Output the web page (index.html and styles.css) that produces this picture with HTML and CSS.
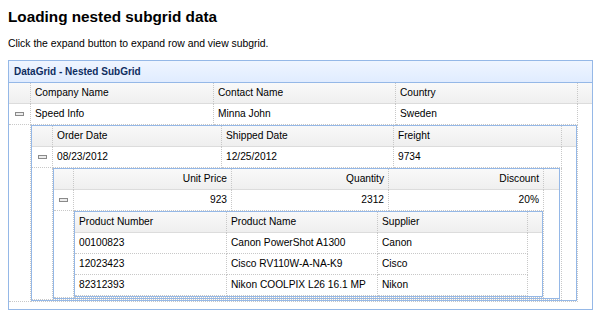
FILE: index.html
```html
<!DOCTYPE html>
<html>
<head>
<meta charset="utf-8">
<link rel="stylesheet" href="styles.css">
</head>
<body>
<h2 class="title">Loading nested subgrid data</h2>
<p class="intro">Click the expand button to expand row and view subgrid.</p>
<div class="panel">
  <div class="panel-header">DataGrid - Nested SubGrid</div>
  <div class="panel-body">
    <div class="grid">
      <div class="hrow">
        <div class="cell w0e"></div>
        <div class="cell w0a">Company Name</div>
        <div class="cell w0b">Contact Name</div>
        <div class="cell w0c">Country</div>
        <div class="filler"></div>
      </div>
      <div class="row">
        <div class="cell w0e exp"><span class="minus"></span></div>
        <div class="cell w0a">Speed Info</div>
        <div class="cell w0b">Minna John</div>
        <div class="cell w0c">Sweden</div>
      </div>
      <div class="row detail">
        <div class="cell w0e"></div>
        <div class="cell w0d dcell">
          <div class="sub s1">
            <div class="hrow">
              <div class="cell w1e"></div>
              <div class="cell w1a">Order Date</div>
              <div class="cell w1b">Shipped Date</div>
              <div class="cell w1c">Freight</div>
              <div class="filler"></div>
            </div>
            <div class="row">
              <div class="cell w1e exp"><span class="minus"></span></div>
              <div class="cell w1a">08/23/2012</div>
              <div class="cell w1b">12/25/2012</div>
              <div class="cell w1c">9734</div>
            </div>
            <div class="row detail">
              <div class="cell w1e"></div>
              <div class="cell w1d dcell">
                <div class="sub s2">
                  <div class="hrow">
                    <div class="cell w2e"></div>
                    <div class="cell w2a num">Unit Price</div>
                    <div class="cell w2b num">Quantity</div>
                    <div class="cell w2c num">Discount</div>
                    <div class="filler"></div>
                  </div>
                  <div class="row">
                    <div class="cell w2e exp"><span class="minus"></span></div>
                    <div class="cell w2a num">923</div>
                    <div class="cell w2b num">2312</div>
                    <div class="cell w2c num">20%</div>
                  </div>
                  <div class="row detail">
                    <div class="cell w2e"></div>
                    <div class="cell w2d dcell">
                      <div class="sub s3">
                        <div class="hrow">
                          <div class="cell w3a">Product Number</div>
                          <div class="cell w3b">Product Name</div>
                          <div class="cell w3c">Supplier</div>
                          <div class="filler"></div>
                        </div>
                        <div class="row">
                          <div class="cell w3a">00100823</div>
                          <div class="cell w3b">Canon PowerShot A1300</div>
                          <div class="cell w3c">Canon</div>
                        </div>
                        <div class="row">
                          <div class="cell w3a">12023423</div>
                          <div class="cell w3b">Cisco RV110W-A-NA-K9</div>
                          <div class="cell w3c">Cisco</div>
                        </div>
                        <div class="row">
                          <div class="cell w3a">82312393</div>
                          <div class="cell w3b">Nikon COOLPIX L26 16.1 MP</div>
                          <div class="cell w3c">Nikon</div>
                        </div>
                      </div>
                    </div>
                  </div>
                </div>
              </div>
            </div>
          </div>
        </div>
      </div>
    </div>
  </div>
</div>
</body>
</html>
```
FILE: styles.css
```css
* { box-sizing: border-box; }
body {
  margin: 0;
  padding: 0 8px;
  font-family: "Liberation Sans", Arial, Helvetica, sans-serif;
  color: #000;
  background: #fff;
}
.title {
  margin: 0;
  padding-top: 7px;
  font-size: 15.3px;
  line-height: 20px;
  font-weight: bold;
}
.intro {
  margin: 0;
  padding-top: 10px;
  font-size: 10.4px;
  line-height: 14px;
}
.panel {
  margin-top: 9px;
  width: 585px;
  border: 1px solid #95b8e7;
}
.panel-header {
  height: 22px;
  border-bottom: 1px solid #95b8e7;
  background: linear-gradient(to bottom, #eff5ff 0, #e0ecff 100%);
  color: #0e2d5f;
  font-weight: bold;
  font-size: 10px;
  line-height: 21px;
  padding-left: 5px;
}
.panel-body {
  height: 226px;
  font-size: 10.2px;
}
.hrow, .row {
  display: flex;
  height: 21px;
}
.hrow {
  background: linear-gradient(to bottom, #f9f9f9 0, #efefef 100%);
  border-bottom: 1px solid #dcdcdc;
}
.row {
  background: #fff;
}
.cell {
  flex: none;
  height: 21px;
  line-height: 20px;
  padding: 0 4px;
  border-right: 1px dotted #c8c8c8;
  border-bottom: 1px dotted #c8c8c8;
  white-space: nowrap;
  overflow: hidden;
}
.hrow .cell { border-bottom: 0; }
.num { text-align: right; }
.filler { flex: 1; }
.exp {
  display: flex;
  align-items: center;
  justify-content: center;
  padding: 0;
}
.minus {
  display: block;
  width: 9px;
  height: 4px;
  border: 1px solid #8a8a8a;
  background: #ececec;
}
.row.detail { height: auto; }
.row.detail > .cell { height: auto; }
.dcell { padding: 0; }
.sub {
  border: 1px solid #95b8e7;
  background: #fff;
}

/* level 0 */
.w0e { width: 22px; }
.w0a { width: 183px; }
.w0b { width: 182px; }
.w0c { width: 182px; }
.w0d { width: 547px; }
/* level 1 */
.s1 { width: 546px; }
.w1e { width: 21px; }
.w1a { width: 169px; }
.w1b { width: 172px; }
.w1c { width: 168px; }
.w1d { width: 509px; }
/* level 2 */
.s2 { width: 507px; }
.w2e { width: 20px; }
.w2a { width: 158px; }
.w2b { width: 157px; }
.w2c { width: 155px; }
.w2d { width: 470px; }
/* level 3 */
.s3 { width: 469px; }
.w3a { width: 152px; }
.w3b { width: 151px; }
.w3c { width: 150px; }
```
